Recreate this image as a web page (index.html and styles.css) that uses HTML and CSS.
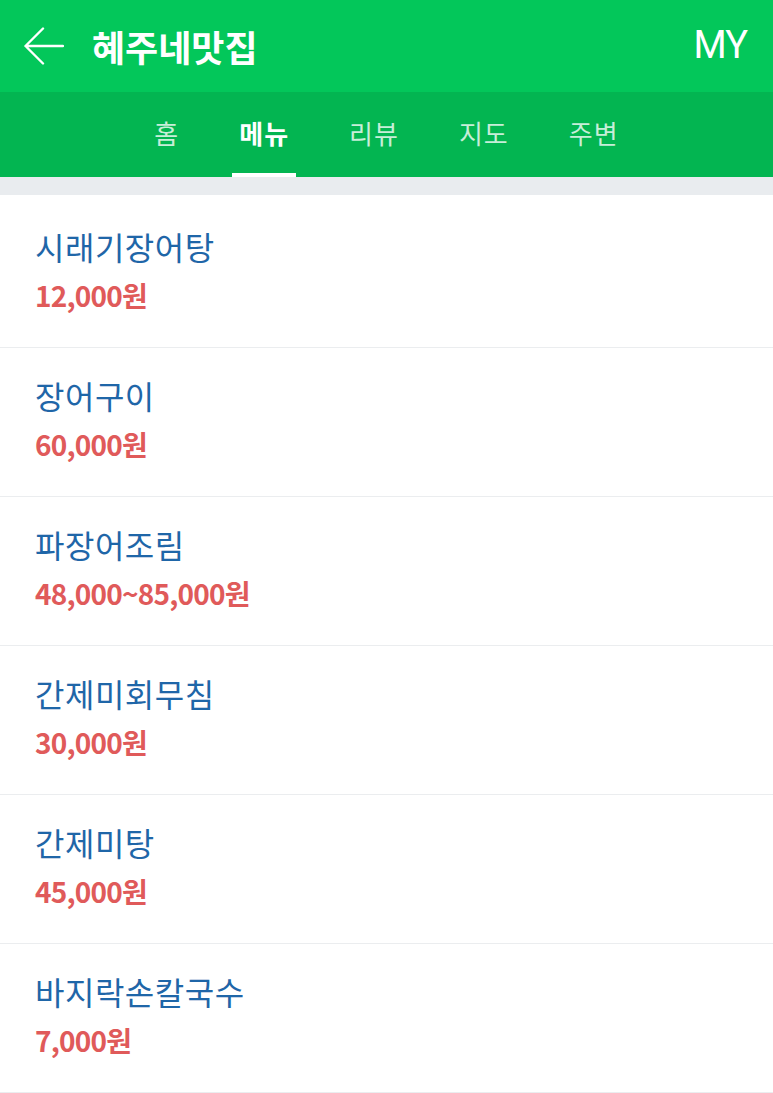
FILE: index.html
```html
<!DOCTYPE html>
<html lang="ko">
<head>
<meta charset="utf-8">
<link rel="stylesheet" href="styles.css">
</head>
<body>
<header class="topbar">
  <svg class="back" viewBox="0 0 40 38" width="40" height="38"><path d="M19 1.5 L1.5 19 L19 36.5 M1.5 19 H39" fill="none" stroke="#fff" stroke-width="2.4" stroke-linecap="round" stroke-linejoin="round"/></svg>
  <h1 class="title">혜주네맛집</h1>
  <span class="my">MY</span>
</header>
<nav class="tabs">
  <span class="tab">홈</span>
  <span class="tab active">메뉴</span>
  <span class="tab">리뷰</span>
  <span class="tab">지도</span>
  <span class="tab">주변</span>
</nav>
<div class="spacer"></div>
<ul class="menu">
  <li class="item"><div class="name">시래기장어탕</div><div class="price">12,000원</div></li>
  <li class="item"><div class="name">장어구이</div><div class="price">60,000원</div></li>
  <li class="item"><div class="name">파장어조림</div><div class="price">48,000~85,000원</div></li>
  <li class="item"><div class="name">간제미회무침</div><div class="price">30,000원</div></li>
  <li class="item"><div class="name">간제미탕</div><div class="price">45,000원</div></li>
  <li class="item"><div class="name">바지락손칼국수</div><div class="price">7,000원</div></li>
</ul>
<div class="bottom-gap"></div>
</body>
</html>
```
FILE: styles.css
```css
* { box-sizing: border-box; }
html, body { margin: 0; padding: 0; background: #fff; }
body { font-family: "Noto Sans CJK KR", "Noto Sans", sans-serif; }
.topbar {
  height: 92px;
  background: #03c75a;
  display: flex;
  align-items: center;
  padding: 0 26px 0 24px;
  color: #fff;
}
.back { display: block; margin-right: 28px; }
.title {
  margin: 0;
  font-size: 36px;
  font-weight: 700;
  letter-spacing: 0;
  line-height: 44px;
  flex: 1;
}
.my {
  font-family: "Roboto", "Noto Sans", sans-serif;
  font-size: 38px;
  font-weight: 400;
  letter-spacing: -1px;
  line-height: 44px;
  margin-top: -2px;
}
.tabs {
  height: 85px;
  background: #03b551;
  display: flex;
  justify-content: center;
  gap: 46px;
}
.tab {
  display: flex;
  align-items: center;
  padding: 0 7px;
  font-size: 26px;
  letter-spacing: 1px;
  color: rgba(255,255,255,0.78);
  border-bottom: 4px solid transparent;
}
.tab.active { color: #fff; font-weight: 700; border-bottom-color: #fff; }
.spacer { height: 18px; background: #e9ecef; }
.menu { list-style: none; margin: 0; padding: 4px 0 0; }
.item {
  height: 149px;
  border-bottom: 1px solid #ebedef;
  padding: 25px 35px 0;
}
.name {
  font-size: 32px;
  color: #1f66a8;
  line-height: 44px;
  letter-spacing: 0.5px;
}
.price {
  margin-top: 5px;
  font-size: 28px;
  font-weight: 700;
  color: #e05a5a;
  line-height: 44px;
  letter-spacing: -0.8px;
}
.bottom-gap { height: 40px; background: #e9ecef; }
```
